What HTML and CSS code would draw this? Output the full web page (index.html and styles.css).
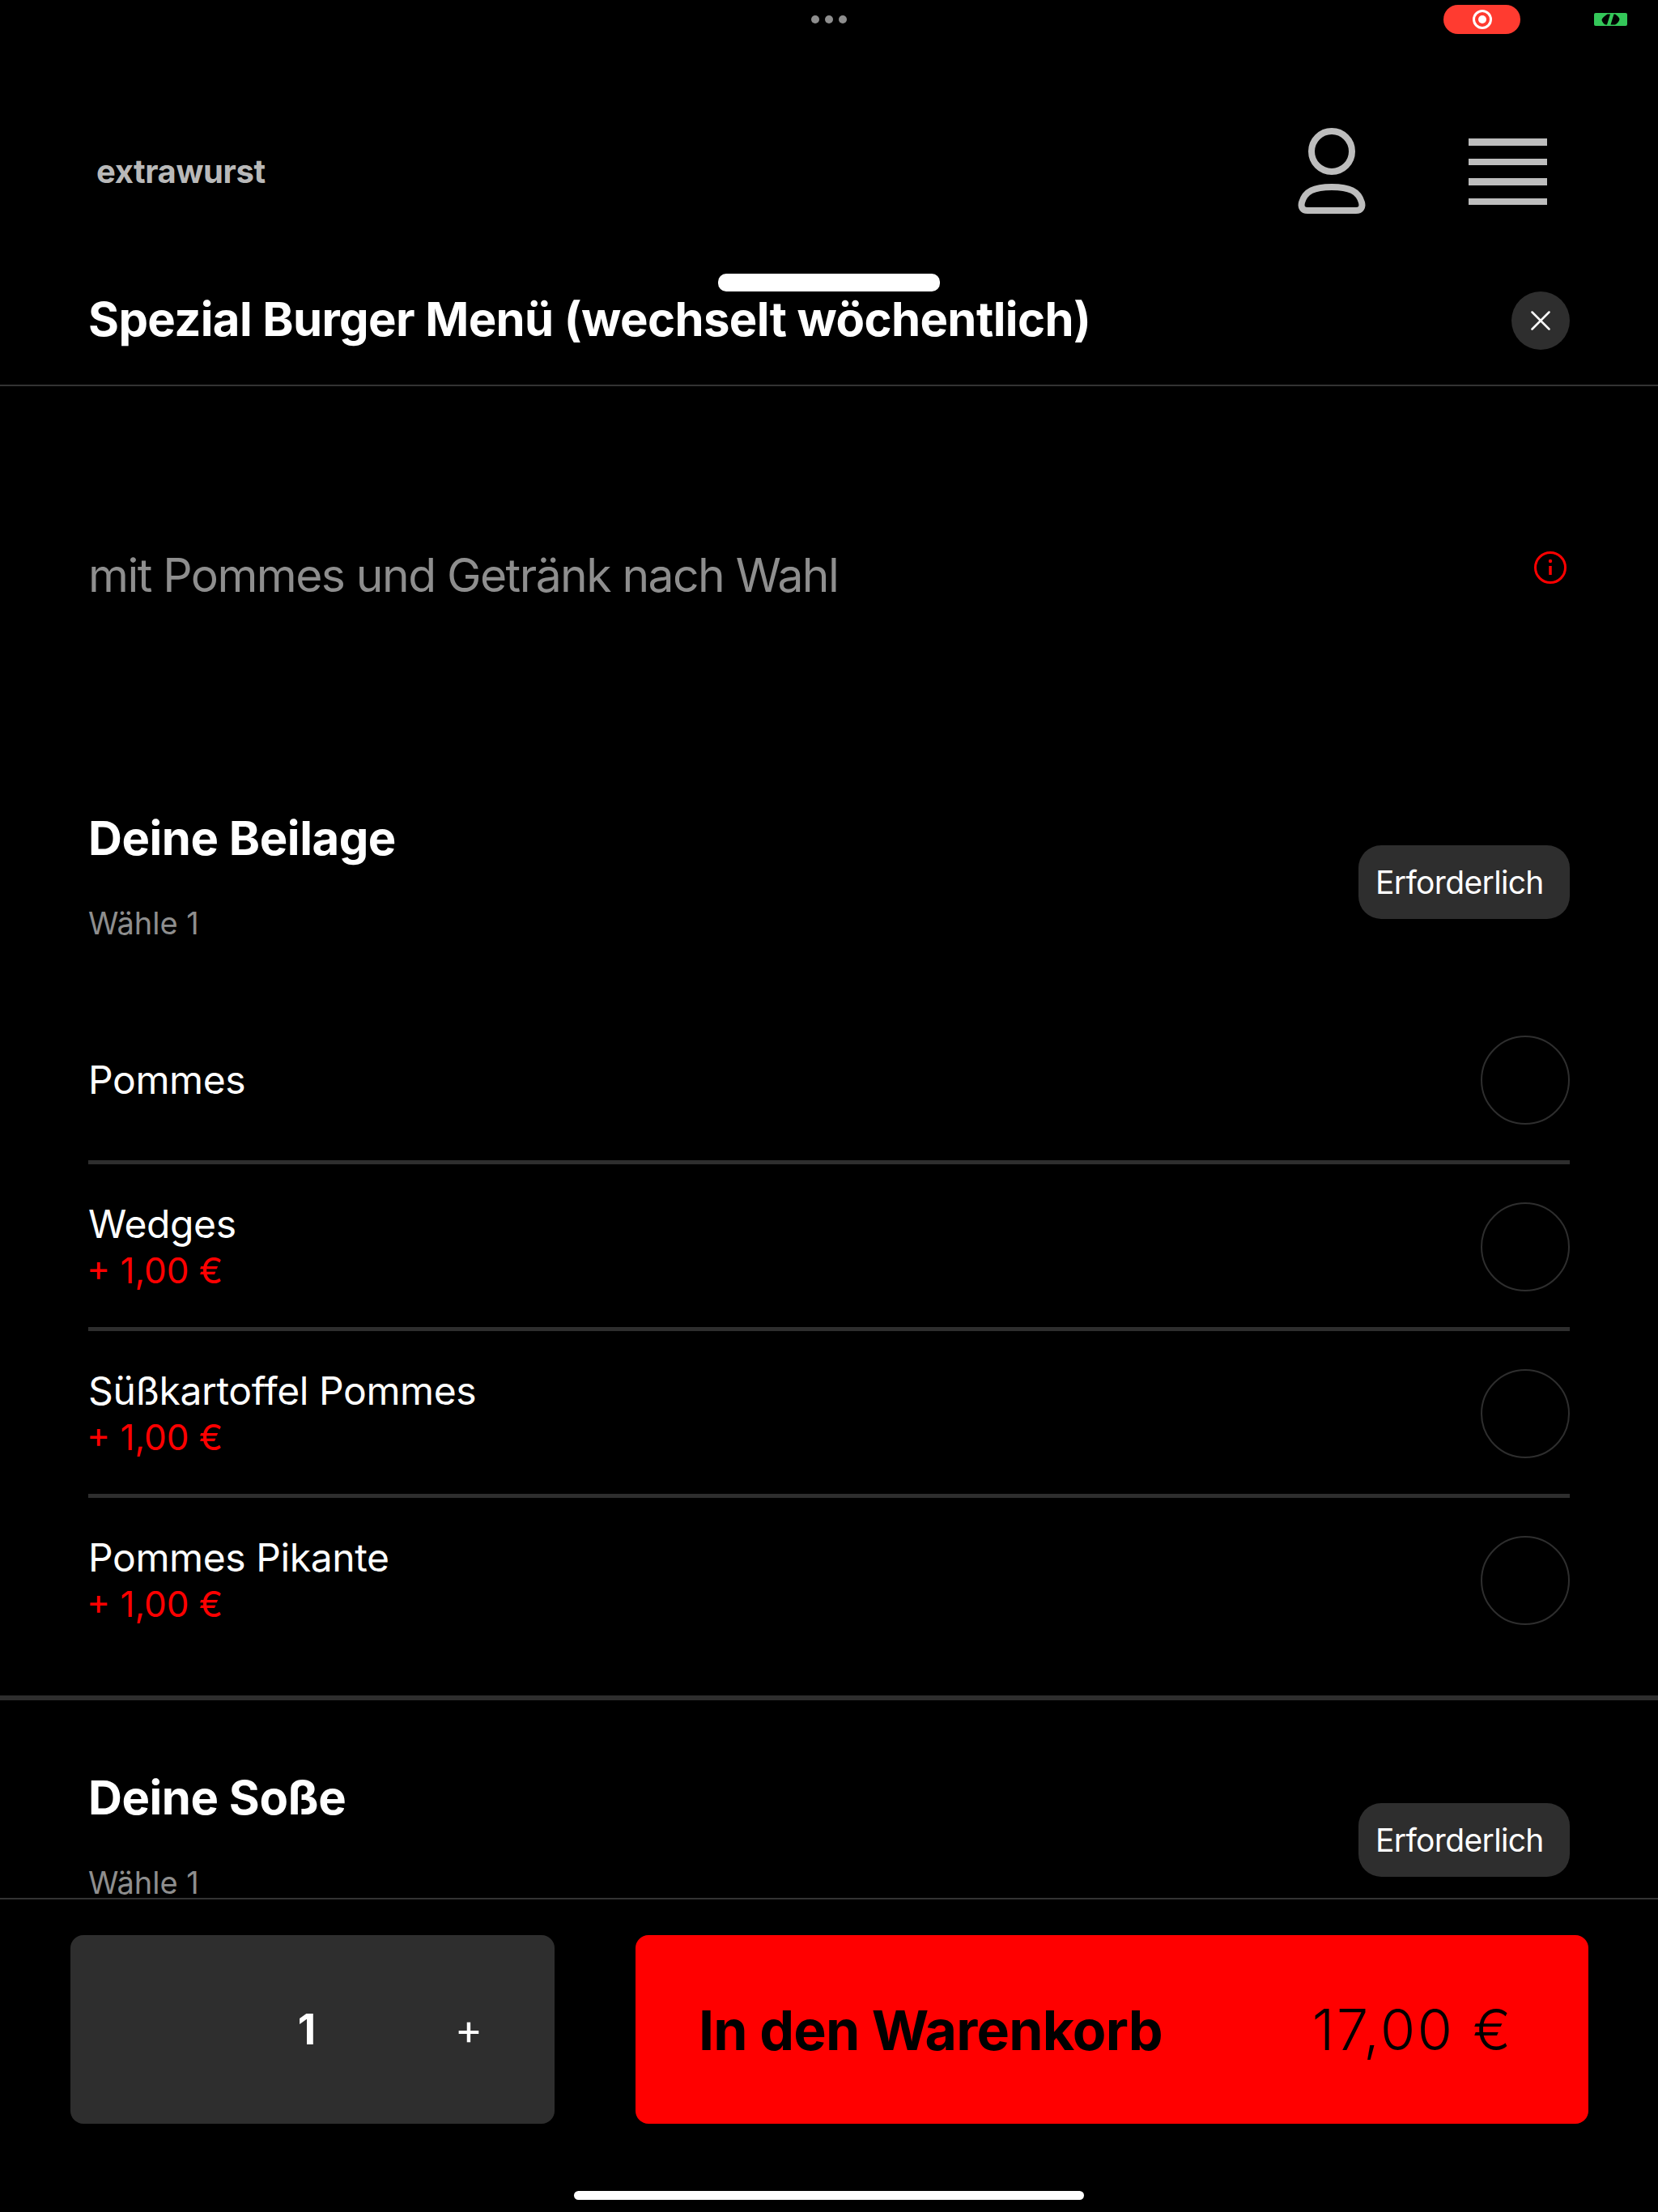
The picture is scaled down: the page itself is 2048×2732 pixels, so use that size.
FILE: index.html
```html
<!DOCTYPE html>
<html lang="de">
<head>
<meta charset="utf-8">
<title>Spezial Burger Menü</title>
<link rel="stylesheet" href="styles.css">
</head>
<body>
<div class="app">
  <div class="statusbar">
    <div class="status-dots"><i></i><i></i><i></i></div>
    <div class="record-pill">
      <svg class="record-icon" viewBox="0 0 26 26"><circle cx="13" cy="13" r="10.5" fill="none" stroke="#fff" stroke-width="3"/><circle cx="13" cy="13" r="5" fill="#fff"/></svg>
    </div>
    <svg class="link-icon" viewBox="0 0 41 16"><rect width="41" height="16" rx="2" fill="#34c759"/><path fill="#000" d="M20 1.500h-3.500C13 4 10 6 9.500 8.500 10 11 12 14 14.500 14.500H16zM24.500 1.500H26c3 2 5 4 5.500 6-.5 3-2.500 5.500-5.500 7h-5.500z"/></svg>
  </div>

  <header class="topbar">
    <div class="logo">extrawurst</div>
    <svg class="user-icon" viewBox="0 0 84 108" fill="none" stroke="#bdbdbd" stroke-width="8">
      <circle cx="42" cy="29" r="25"/>
      <path d="M42 73c-22 0-33 5-37 19-1.500 6 1 10 7 10h60c6 0 8.500-4 7-10-4-14-15-19-37-19z"/>
    </svg>
    <div class="burger"><i></i><i></i><i></i><i></i></div>
  </header>

  <section class="sheet">
    <div class="sheet-handle"></div>
    <div class="sheet-head">
      <h1 class="sheet-title">Spezial Burger Menü (wechselt wöchentlich)</h1>
      <button class="close-btn" aria-label="Schließen">
        <svg viewBox="0 0 24 24" fill="none" stroke="#fff" stroke-width="2.500" stroke-linecap="round"><path d="M1.500 1.500l21 21M22.500 1.500l-21 21"/></svg>
      </button>
    </div>

    <div class="sheet-body">
      <div class="intro">
        <p class="intro-text">mit Pommes und Getränk nach Wahl</p>
        <svg class="info-icon" viewBox="0 0 40 40" fill="none"><circle cx="20" cy="20" r="18.500" stroke="#f00" stroke-width="3"/><circle cx="20" cy="12" r="2.200" fill="#f00"/><path d="M20 18v11" stroke="#f00" stroke-width="3.500"/></svg>
      </div>

      <div class="group">
        <div class="group-head">
          <div>
            <h2 class="group-title">Deine Beilage</h2>
            <p class="group-sub">Wähle 1</p>
          </div>
          <span class="chip">Erforderlich</span>
        </div>
        <div class="options">
          <div class="option">
            <div class="option-label"><div class="option-name">Pommes</div></div>
            <span class="radio"></span>
          </div>
          <div class="option">
            <div class="option-label"><div class="option-name">Wedges</div><div class="option-price">+ 1,00 €</div></div>
            <span class="radio"></span>
          </div>
          <div class="option">
            <div class="option-label"><div class="option-name">Süßkartoffel Pommes</div><div class="option-price">+ 1,00 €</div></div>
            <span class="radio"></span>
          </div>
          <div class="option">
            <div class="option-label"><div class="option-name">Pommes Pikante</div><div class="option-price">+ 1,00 €</div></div>
            <span class="radio"></span>
          </div>
        </div>
      </div>

      <div class="group group-next">
        <div class="group-head">
          <div>
            <h2 class="group-title">Deine Soße</h2>
            <p class="group-sub">Wähle 1</p>
          </div>
          <span class="chip">Erforderlich</span>
        </div>
      </div>
    </div>
  </section>

  <footer class="footer">
    <div class="footer-actions">
      <div class="qty">
        <span></span>
        <span class="qty-value">1</span>
        <span class="qty-plus">+</span>
      </div>
      <button class="cart-btn"><span class="cart-label">In den Warenkorb</span><span class="cart-price">17,00 €</span></button>
    </div>
    <div class="home-indicator"></div>
  </footer>
</div>
</body>
</html>
```
FILE: styles.css
```css
* { box-sizing: border-box; }
html, body { margin: 0; padding: 0; background: #000; }
body { font-family: Inter, "Liberation Sans", sans-serif; color: #fff; }
h1, h2, p { margin: 0; }

.app { width: 2048px; height: 2732px; display: flex; flex-direction: column; overflow: hidden; background: #000; }

.statusbar { height: 48px; flex: none; display: flex; align-items: flex-start; padding: 6px 38px 0 1002px; }
.status-dots { display: flex; gap: 7px; margin-top: 13px; width: 44px; }
.status-dots i { width: 10px; height: 10px; border-radius: 50%; background: #8e8e8e; }
.record-pill { margin-left: 737px; width: 95px; height: 36px; border-radius: 18px; background: #ff3b30; display: flex; align-items: center; justify-content: center; }
.record-icon { width: 26px; height: 26px; }
.link-icon { width: 41px; height: 16px; margin-left: 91px; margin-top: 10px; }

.topbar { height: 268px; flex: none; display: flex; align-items: flex-start; padding: 110px 137px 0 119px; }
.logo { font-size: 40px; line-height: 56px; font-weight: 700; letter-spacing: -0.4px; color: #b9b9b9; margin-top: 26px; flex: 1; }
.user-icon { width: 84px; height: 108px; }
.burger { margin-left: 127px; margin-top: 13px; width: 97px; display: flex; flex-direction: column; gap: 16px; }
.burger i { display: block; height: 8.500px; background: #bdbdbd; }

.sheet { flex: 1; min-height: 0; display: flex; flex-direction: column; position: relative; }
.sheet-handle { position: absolute; top: 22px; left: 887px; width: 274px; height: 22px; border-radius: 10px; background: #fff; }
.sheet-head { height: 161px; flex: none; display: flex; align-items: center; justify-content: space-between; padding: 0 109px; border-bottom: 2px solid #333; }
.sheet-title { font-size: 58px; line-height: 68px; font-weight: 700; letter-spacing: -0.6px; margin-bottom: 3px; }
.close-btn { width: 72px; height: 72px; border: 0; border-radius: 50%; background: #2e2e2e; padding: 0; display: flex; align-items: center; justify-content: center; }
.close-btn svg { width: 24px; height: 24px; }

.sheet-body { flex: 1; min-height: 0; }
.intro { display: flex; justify-content: space-between; align-items: flex-start; padding: 200px 113px 0 109px; }
.intro-text { font-size: 57px; line-height: 68px; letter-spacing: -1.550px; color: #8e8e8e; }
.info-icon { width: 40px; height: 40px; margin-top: 4px; }

.group { margin-top: 254px; border-bottom: 6px solid #2e2e2e; padding-bottom: 38px; }
.group-next { margin-top: 84px; border-bottom: 0; padding-bottom: 0; }
.group-head { display: flex; justify-content: space-between; align-items: center; padding: 0 109px; }
.group-title { font-size: 58px; line-height: 72px; font-weight: 700; letter-spacing: -0.45px; }
.group-sub { margin-top: 51px; font-size: 38px; line-height: 36px; color: #8e8e8e; }
.chip { margin-top: 22px; width: 261px; height: 91px; border-radius: 28px; background: #2e2e2e; font-size: 39px; letter-spacing: -0.65px; line-height: 91px; padding-left: 21px; }
.group-next .chip { margin-top: 18px; }

.options { margin: 74px 109px 0; }
.option { height: 206px; padding-top: 3px; display: flex; justify-content: space-between; align-items: center; border-bottom: 5px solid #2e2e2e; }
.option:last-child { border-bottom-color: transparent; }
.option-name { font-size: 48px; line-height: 58px; letter-spacing: -0.4px; }
.option-price { font-size: 44px; line-height: 56px; color: #f00; margin-left: -2px; }
.radio { width: 110px; height: 110px; border-radius: 50%; border: 2px solid #2e2e2e; }

.footer { height: 388px; flex: none; border-top: 2px solid #333; padding: 44px 86px 0 87px; }
.footer-actions { display: flex; justify-content: space-between; }
.qty { width: 598px; height: 233px; border-radius: 16px; background: #2e2e2e; display: grid; grid-template-columns: 192px 200px 200px; align-items: center; justify-items: center; }
.qty-value { font-size: 52px; font-weight: 700; }
.qty-plus { font-size: 52px; }
.cart-btn { width: 1177px; height: 233px; border: 0; border-radius: 16px; background: #f00; color: #000; font-family: inherit; display: flex; align-items: center; justify-content: space-between; padding: 0 93px 0 78px; }
.cart-label { font-size: 68px; font-weight: 700; letter-spacing: -0.8px; }
.cart-price { font-size: 70px; font-weight: 300; letter-spacing: 2.700px; }
.home-indicator { width: 630px; height: 11px; border-radius: 6px; background: #fff; margin: 83px 0 0 622px; }
```
